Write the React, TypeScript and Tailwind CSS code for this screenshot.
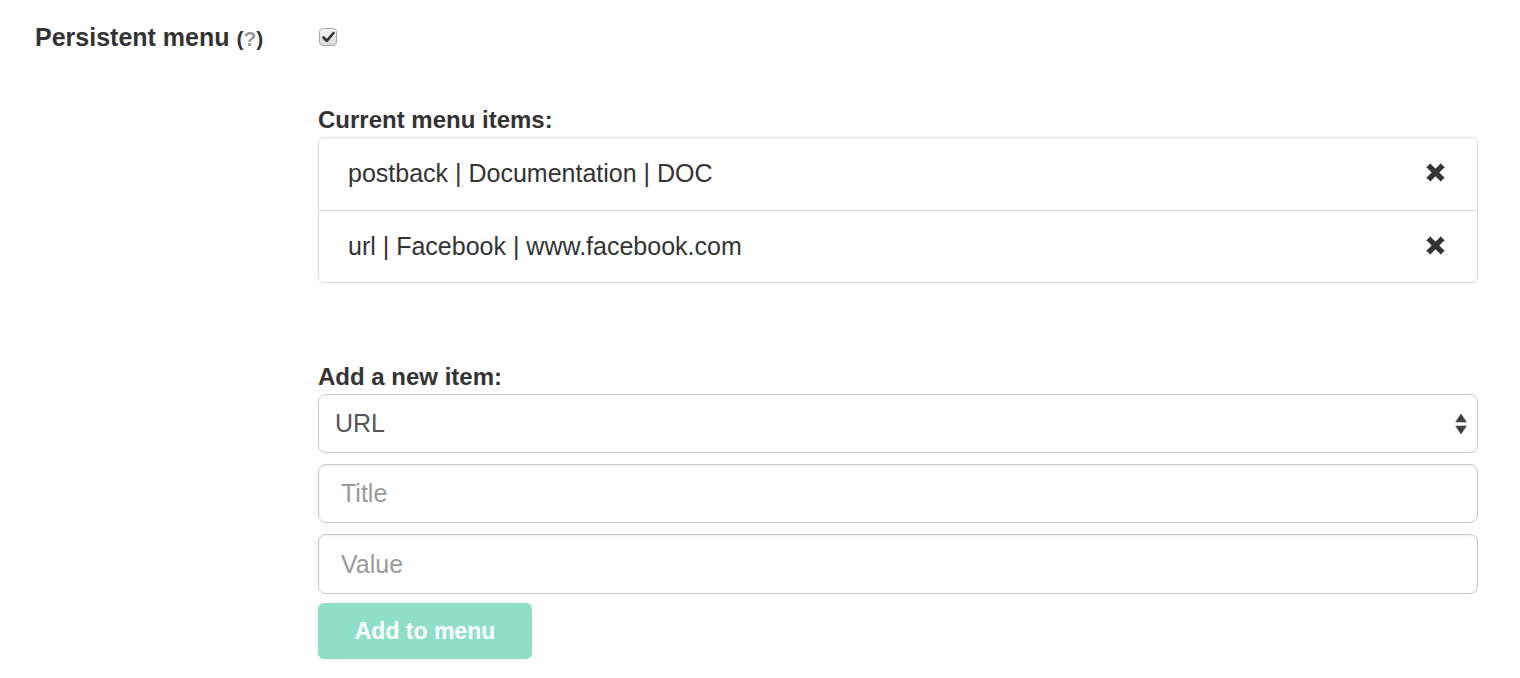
import React from 'react';

const items = [
    'postback | Documentation | DOC',
    'url | Facebook | www.facebook.com',
];

const Checkbox = () => (
    <div className="w-[18px] h-[18px] rounded-[4px] border border-[#a8a8a8] bg-gradient-to-b from-[#f6f6f6] to-[#d9d9d9] flex items-center justify-center">
        <svg width="13" height="12" viewBox="0 0 13 12">
            <path d="M1.5 6.5 L4.8 9.8 L11.5 2" fill="none" stroke="#333" strokeWidth="2.6" strokeLinecap="round" strokeLinejoin="round" />
        </svg>
    </div>
);

// heavy "times" glyph, like the icon font one
const Times = () => (
    <svg width="21" height="21" viewBox="0 0 21 21" className="-mt-[3px]">
        <path d="M3.6 3.6 L17.4 17.4 M17.4 3.6 L3.6 17.4" stroke="#333" strokeWidth="5.4" strokeLinecap="butt" />
        <path d="M1.7 5.5 L5.5 1.7 M15.5 1.7 L19.3 5.5 M19.3 15.5 L15.5 19.3 M5.5 19.3 L1.7 15.5" stroke="#333" strokeWidth="0.8" strokeLinecap="round" />
    </svg>
);

export default function App() {
    return (
        <div className="min-h-screen bg-white text-[#333] pl-[35px] pt-[22px] font-['Liberation_Sans',Arial,sans-serif]">
            <div className="flex">
                <div className="w-[283px] shrink-0 text-[25px] leading-[30px] font-bold">
                    Persistent menu <span className="text-[21px]">(<span className="text-[#9a9a9a]">?</span>)</span>
                </div>

                <div className="w-[1160px]">
                    <div className="h-[30px] flex items-center pl-px">
                        <Checkbox />
                    </div>

                    <h3 className="mt-[53px] mb-[3px] text-[24px] leading-[29px] font-bold">Current menu items:</h3>
                    <ul className="border border-[#dadada] rounded-[6px]">
                        {items.map((item, i) => (
                            <li
                                key={item}
                                className={`h-[72px] flex items-center justify-between pl-[29px] pr-[31px] text-[25px] ${i > 0 ? 'border-t border-[#dadada]' : ''}`}
                            >
                                <span>{item}</span>
                                <Times />
                            </li>
                        ))}
                    </ul>

                    <h3 className="mt-[79px] mb-[3px] text-[24px] leading-[29px] font-bold">Add a new item:</h3>
                    <div className="relative h-[59px] border border-[#c8c8c8] rounded-[8px] bg-white flex items-center pl-[16px] text-[25px] text-[#555]">
                        URL
                        <div className="absolute right-[10px] top-1/2 -translate-y-1/2 flex flex-col gap-[3px]">
                            <svg width="12" height="9" viewBox="0 0 12 9"><path d="M6 0 L12 9 L0 9 Z" fill="#444" /></svg>
                            <svg width="12" height="9" viewBox="0 0 12 9"><path d="M0 0 L12 0 L6 9 Z" fill="#444" /></svg>
                        </div>
                    </div>

                    <input
                        placeholder="Title"
                        className="mt-[11px] block w-full h-[59px] border border-[#c8c8c8] rounded-[8px] pl-[22px] text-[25px] placeholder:text-[#9a9a9a] shadow-[inset_0_1px_2px_rgba(0,0,0,0.08)] outline-none"
                    />
                    <input
                        placeholder="Value"
                        className="mt-[11px] block w-full h-[60px] border border-[#c8c8c8] rounded-[8px] pl-[22px] text-[25px] placeholder:text-[#9a9a9a] shadow-[inset_0_1px_2px_rgba(0,0,0,0.08)] outline-none"
                    />

                    <button className="mt-[9px] w-[214px] h-[56px] rounded-[6px] bg-[#8fdfc8] text-white text-[23px] font-bold">
                        Add to menu
                    </button>
                </div>
            </div>
        </div>
    );
}
